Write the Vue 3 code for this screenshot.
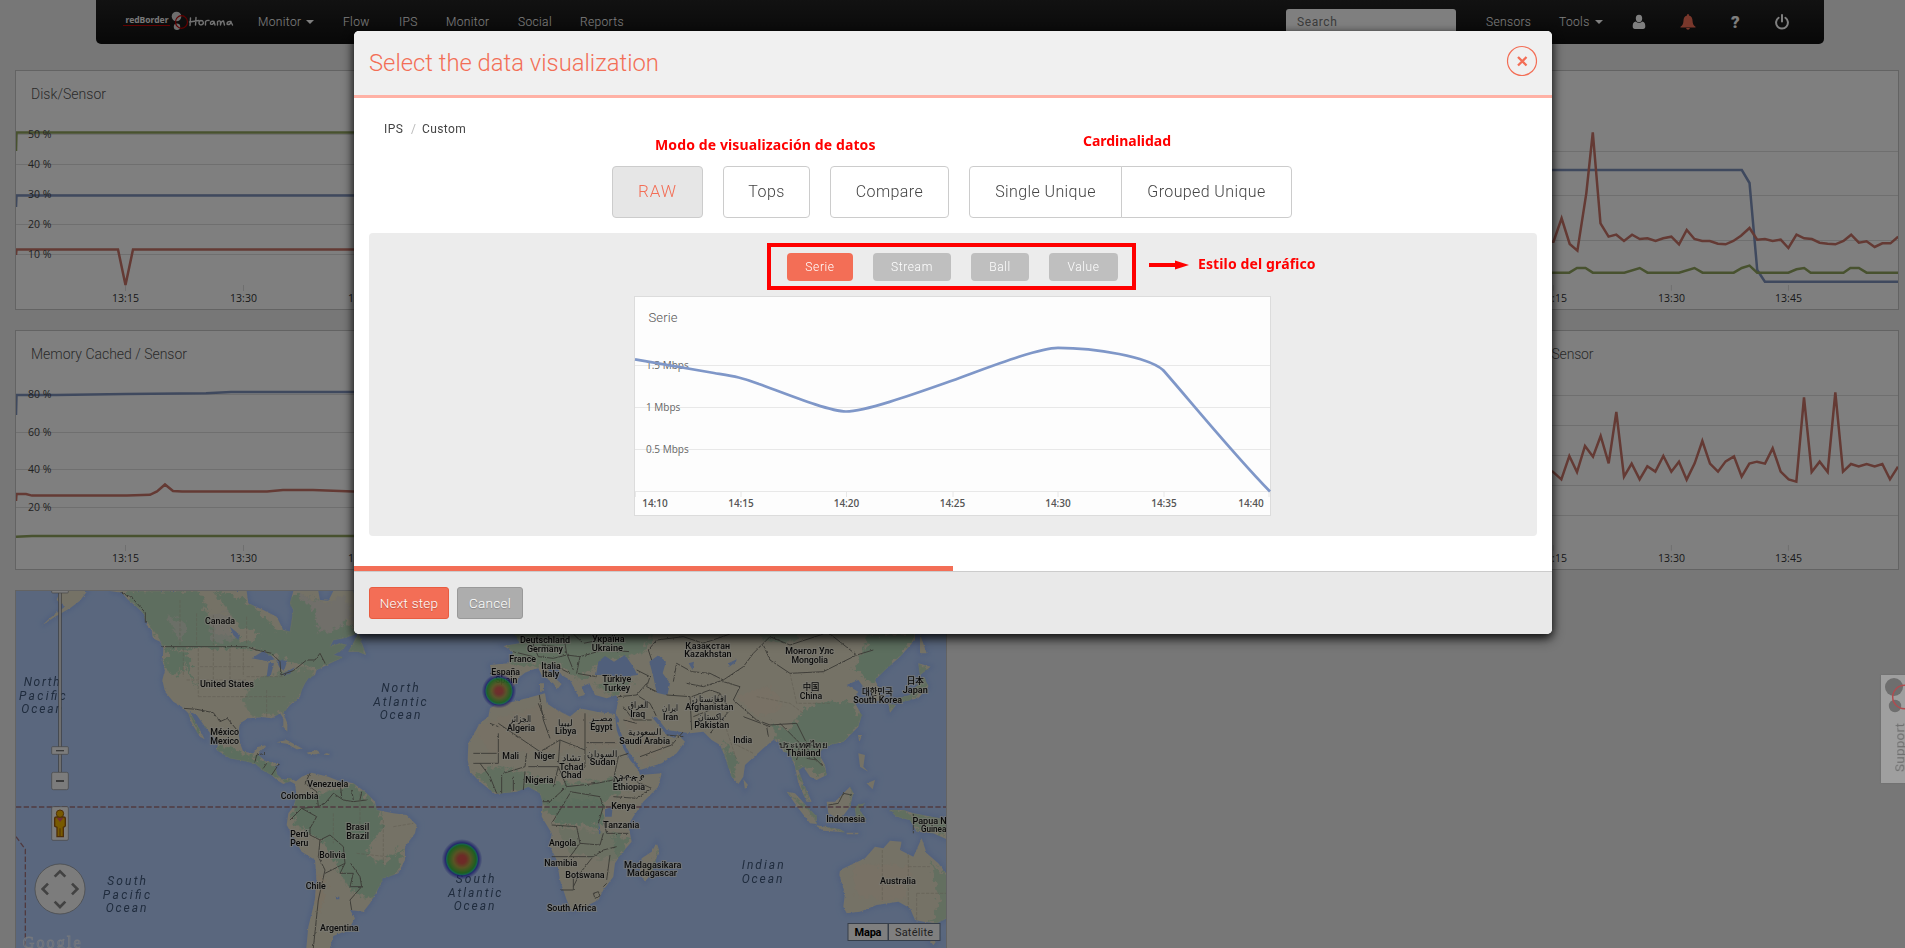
<script setup>
const leftNav = [
  { label: 'Monitor', w: 85, caret: true },
  { label: 'Flow', w: 56 },
  { label: 'IPS', w: 47 },
  { label: 'Monitor', w: 72 },
  { label: 'Social', w: 62 },
  { label: 'Reports', w: 60 },
]

const axisTicks = [
  { x: 109.5, label: '13:15' },
  { x: 227.5, label: '13:30' },
  { x: 345.5, label: '13:45' },
]

const percentRows = [
  { y: 63.5, label: '50 %' },
  { y: 93.5, label: '40 %' },
  { y: 123.5, label: '30 %' },
  { y: 153.5, label: '20 %' },
  { y: 183.5, label: '10 %' },
]
const memoryRows = [
  { y: 63.5, label: '80 %' },
  { y: 101.5, label: '60 %' },
  { y: 138.5, label: '40 %' },
  { y: 176.5, label: '20 %' },
]

const modes = [
  { label: 'RAW', w: 91, active: true },
  { label: 'Tops', w: 87 },
  { label: 'Compare', w: 119 },
]
const styles = [
  { label: 'Serie', w: 66, active: true },
  { label: 'Stream', w: 78 },
  { label: 'Ball', w: 58 },
  { label: 'Value', w: 69 },
]

const serieRows = [
  { y: 69.5, label: '1.5 Mbps' },
  { y: 111.5, label: '1 Mbps' },
  { y: 153.5, label: '0.5 Mbps' },
]
const serieTicks = [
  { x: 0.5, tx: 20, label: '14:10' },
  { x: 106, tx: 106, label: '14:15' },
  { x: 211.5, tx: 211.5, label: '14:20' },
  { x: 318, tx: 317.5, label: '14:25' },
  { x: 423, tx: 423, label: '14:30' },
  { x: 529, tx: 529, label: '14:35' },
  { x: 634, tx: 616, label: '14:40' },
]

const westLabels = [
  [660, 132, 'Canada', 90], [681, 321, 'United States', 162], [674, 465, 'México', 86], [674, 492, 'Mexico', 86],
  [983, 621, 'Venezuela', 123], [899, 657, 'Colombia', 113], [1073, 750, 'Brasil', 70], [1073, 777, 'Brazil', 69],
  [898, 771, 'Perú', 54], [898, 798, 'Peru', 54], [997, 834, 'Bolivia', 78], [947, 927, 'Chile', 60], [1018, 1053, 'Argentina', 116],
]
const eastLabels = [
  [225, 69, 'Deutschland', 150], [225, 96, 'Germany', 108], [415, 66, 'Україна', 98], [412, 93, 'Ukraine', 94],
  [158, 126, 'France', 80], [243, 147, 'Italia', 58], [242, 171, 'Italy', 52], [107, 165, 'España', 86], [109, 189, 'Spain', 66],
  [440, 187, 'Türkiye', 87], [440, 214, 'Turkey', 80], [713, 87, 'Қазақстан', 134], [714, 111, 'Kazakhstan', 142],
  [1019, 102, 'Монгол Улс', 146], [1019, 129, 'Mongolia', 109], [1023, 210, '中国', 50], [1023, 237, 'China', 67],
  [1222, 225, '대한민국', 92], [1223, 249, 'South Korea', 146], [1336, 192, '日本', 52], [1336, 219, 'Japan', 75],
  [505, 264, 'العراق', 64], [503, 291, 'Iraq', 45], [601, 273, 'ايران', 50], [602, 300, 'Iran', 46],
  [718, 246, 'افغانستان', 102], [718, 270, 'Afghanistan', 145], [724, 300, 'باكستان', 80], [725, 324, 'Pakistan', 105],
  [152, 306, 'الجزائر', 66], [153, 333, 'Algeria', 84], [287, 318, 'ليبيا', 44], [287, 342, 'Libya', 64],
  [394, 304, 'مصــر', 70], [394, 330, 'Egypt', 67], [525, 345, 'السعودية', 104], [524, 371, 'Saudi Arabia', 152],
  [818, 369, 'India', 57], [999, 384, 'ประเทศไทย', 146], [1000, 408, 'Thailand', 104],
  [122, 417, 'Mali', 50], [224, 417, 'Niger', 62], [304, 423, 'تشاد', 58], [304, 450, 'Tchad', 72], [304, 474, 'Chad', 62],
  [397, 411, 'السودان', 90], [398, 435, 'Sudan', 77], [208, 489, 'Nigeria', 84], [475, 483, 'ኢትዮጵያ', 92], [477, 510, 'Ethiopia', 97],
  [460, 567, 'Kenya', 73], [454, 624, 'Tanzania', 108], [278, 678, 'Angola', 82], [272, 738, 'Namibia', 99],
  [345, 774, 'Botswana', 118], [548, 744, 'Madagasikara', 172], [546, 768, 'Madagascar', 150], [305, 873, 'South Africa', 148],
  [1127, 606, 'Indonesia', 117], [1379, 612, 'Papua N', 103], [1391, 636, 'Guinea', 76], [1284, 792, 'Australia', 108],
]
const westSeas = [
  [125, 318, 'North', 108], [127, 361, 'Pacific', 140], [125, 400, 'Ocean', 122],
  [1200, 336, 'North', 112], [1200, 378, 'Atlantic', 160], [1200, 418, 'Ocean', 122],
  [380, 915, 'South', 116], [379, 957, 'Pacific', 142], [378, 997, 'Ocean', 122],
  [1425, 909, 'South', 116], [1424, 951, 'Atlantic', 160], [1422, 991, 'Ocean', 122],
]
const eastSeas = [[878, 748, 'Indian', 126], [876, 788, 'Ocean', 122]]
</script>

<template>
  <div class="page">
    <header class="navbar">
      <svg class="logo" width="140" height="44" viewBox="0 0 140 44">
        <text x="15.500" y="23" class="brand" textLength="43" lengthAdjust="spacingAndGlyphs">redBorder</text>
        <path d="M13 25.500H60" stroke="#c00000" stroke-width="1" />
        <circle cx="66.500" cy="16.500" r="4.800" fill="#dcdcdc" />
        <circle cx="67" cy="26.800" r="3.200" fill="#dcdcdc" />
        <ellipse cx="71.500" cy="22" rx="6" ry="6.300" fill="none" stroke="#c00000" stroke-width="1.200" />
        <g fill="none" stroke="#e4e4e4" stroke-width="1.400" stroke-linecap="round" stroke-linejoin="round">
          <path d="M80.500 18L80 25.500M86 17.500L85.500 25M79.500 22L89 20.500" />
          <path d="M91 20.500C88 21 88.500 25.500 91.500 24.800C94.500 24 93.500 20.500 91 20.500" />
          <path d="M95.500 25V21.500Q97 20 99 20.500M104 21.500Q100 20.500 100.500 24Q103 25.500 104 21.500L105 25M107.500 25V21.500Q110 20 110.500 22V25Q111 21 113.500 21L114.500 25M121 21.500Q117 21 117 24Q120 25.500 121 22L122.500 25" />
        </g>
      </svg>
      <nav class="links">
        <a v-for="(n, i) in leftNav" :key="i" :style="{ width: n.w + 'px' }">{{ n.label }}<i v-if="n.caret" class="caret"></i></a>
      </nav>
      <div class="search">Search</div>
      <nav class="tools">
        <a class="sensors">Sensors</a>
        <a class="tool">Tools<i class="caret"></i></a>
        <svg width="14" height="16" viewBox="0 0 14 16" fill="#fff"><path d="M7 .8C9.300 .8 10.200 2.500 10.200 4.500S9 8.300 7 8.300 3.800 6.500 3.800 4.500 4.700.8 7 .8ZM3.500 7.500Q7 10.300 10.500 7.500C12.800 8 13.300 10 13.300 12.300Q13.300 15 11 15H3Q.7 15 .7 12.300C.7 10 1.200 8 3.500 7.500Z" /></svg>
        <svg width="16" height="16" viewBox="0 0 16 16" fill="#f36e56"><path d="M8 0Q9 0 9 1.400C11.800 2 12.400 4.300 12.500 6.500C12.700 10 13.500 11.300 15.500 12.800V13.600H.5V12.800C2.500 11.300 3.300 10 3.500 6.500C3.600 4.300 4.200 2 7 1.400Q7 0 8 0ZM6 14H10Q9.500 15.800 8 15.800T6 14Z" /></svg>
        <span class="help">?</span>
        <svg width="16" height="16" viewBox="0 0 16 16" fill="none" stroke="#fff" stroke-width="2" stroke-linecap="round"><path d="M8 1V7.500M4.600 3.800A5.900 5.900 0 1 0 11.400 3.800" /></svg>
      </nav>
    </header>

    <main class="board">
      <section class="panel">
        <svg class="plot" width="454" height="238" viewBox="0 0 454 238">
          <text class="title" x="15" y="28" textLength="75">Disk/Sensor</text>
          <path v-for="r in percentRows" :key="r.y" class="grid" :d="`M0 ${r.y}H454`" />
          <path v-for="t in axisTicks" :key="t.x" class="grid" :d="`M${t.x} 214V220`" />
          <path class="line green" d="M0 80L.5 61.500H454" />
          <path class="line blue" d="M0 136L.5 124.500H454" />
          <path class="line red" d="M0 184L.5 178.500H102L109.500 214L117 178.500H454" />
          <text v-for="r in percentRows" :key="r.label" class="axis" x="12" :y="r.y + 3">{{ r.label }}</text>
          <text v-for="t in axisTicks" :key="t.label" class="axis mid" :x="t.x" y="231">{{ t.label }}</text>
        </svg>
      </section>
      <section class="panel"></section>
      <section class="panel"></section>
      <section class="panel">
        <svg class="plot" width="454" height="238" viewBox="0 0 454 238">
          <g transform="translate(-174 -71) scale(.405 .33333)">
            <path class="grid" d="M500 454.500H1560M500 586.500H1560M500 721.500H1560M991 855V872M1280 855V872M700 855V872" />
            <path class="line blue" d="M600 510H1165L1184 549L1203 810L1222 845H1560" />
            <path class="line red" d="M680 725H700L720 655L740 732L759 752L781 580L797 397L816 670L836 710L855 704L874 723L894 704L913 717L932 715L952 723L971 715L991 710L1010 733L1029 690L1048 717L1067 723H1086L1106 731L1125 733L1144 723L1163 707L1184 684L1203 719L1222 717L1241 723L1261 719L1280 744L1300 704L1319 715L1338 717L1357 728L1377 731L1396 733L1416 723L1435 704L1454 728L1473 724L1493 741L1512 730H1532L1551 710" />
            <path class="line green" d="M600 818H739L758 804H779L797 818H875L913 804L932 818H1010L1048 804L1068 818H1145L1165 804L1184 797L1203 818H1280L1300 808L1319 804L1335 818H1416L1433 804H1454L1473 818H1560" />
          </g>
          <text class="axis mid" x="109.500" y="231">13:15</text>
          <text class="axis mid" x="227.500" y="231">13:30</text>
          <text class="axis mid" x="344.500" y="231">13:45</text>
        </svg>
      </section>

      <section class="panel">
        <svg class="plot" width="454" height="238" viewBox="0 0 454 238">
          <text class="title" x="15" y="28" textLength="156">Memory Cached / Sensor</text>
          <path v-for="r in memoryRows" :key="r.y" class="grid" :d="`M0 ${r.y}H454`" />
          <path v-for="t in axisTicks" :key="t.x" class="grid" :d="`M${t.x} 214V220`" />
          <path class="line blue" d="M0 84L.5 64H40L110 63L190 62.300L215 61H454" />
          <path class="line red" d="M0 170L.5 163H10L16 164.600H111L134 163.800L141 160.500L149 153.500L157 160L166 160.500H251L267 159H297L337 160.500H454" />
          <path class="line green" d="M0 205.700L16 205H454" />
          <text v-for="r in memoryRows" :key="r.label" class="axis" x="12" :y="r.y + 3">{{ r.label }}</text>
          <text v-for="t in axisTicks" :key="t.label" class="axis mid" :x="t.x" y="231">{{ t.label }}</text>
        </svg>
      </section>
      <section class="panel"></section>
      <section class="panel"></section>
      <section class="panel">
        <svg class="plot" width="454" height="238" viewBox="0 0 454 238">
          <text class="title" x="107.500" y="28" textLength="42">Sensor</text>
          <g transform="translate(96 -21) scale(.33333)">
            <path class="grid" d="M-290 256.500H1080M-290 346.500H1080M-290 436.500H1080M-290 526.500H1080M-290 616.500H1080M40 705V722M394 705V722M745 705V722" />
            <path class="line red" d="M20 480L38 485L64 508L88 438L111 486L135 408L159 440L182 378L206 460L229 306L252 500L275 461L299 508L322 469L346 485L370 438L394 485L417 455L440 509L464 460L487 393L510 461L534 485L557 454L582 439L605 500L628 461L651 455L675 461L698 415L722 485L746 508L769 515L792 262L815 486L839 455L863 486L886 247L909 485L933 462L956 469L980 462L1004 469L1027 462L1050 508L1074 470" />
          </g>
          <text class="axis mid" x="109.500" y="231">13:15</text>
          <text class="axis mid" x="227.500" y="231">13:30</text>
          <text class="axis mid" x="344.500" y="231">13:45</text>
        </svg>
      </section>

      <section class="panel map">
        <svg class="plot" width="931" height="420" viewBox="0 0 931 420">
          <defs>
            <filter id="coast" x="-5%" y="-5%" width="110%" height="110%">
              <feTurbulence type="fractalNoise" baseFrequency=".11" numOctaves="3" seed="4" result="n" />
              <feDisplacementMap in="SourceGraphic" in2="n" scale="7" xChannelSelector="R" yChannelSelector="G" />
            </filter>
            <filter id="mottle" x="-10%" y="-10%" width="120%" height="120%">
              <feTurbulence type="fractalNoise" baseFrequency=".06" numOctaves="4" seed="9" result="n" />
              <feDisplacementMap in="SourceGraphic" in2="n" scale="40" xChannelSelector="R" yChannelSelector="G" />
              <feGaussianBlur stdDeviation="1.800" />
            </filter>
            <filter id="shelf" x="-5%" y="-5%" width="110%" height="110%"><feGaussianBlur stdDeviation="8" /></filter>
            <radialGradient id="heat">
              <stop offset="0" stop-color="#e0504e" /><stop offset=".2" stop-color="#d8584e" /><stop offset=".42" stop-color="#b0a848" />
              <stop offset=".68" stop-color="#3fbe3e" /><stop offset=".76" stop-color="#2ac4a0" /><stop offset=".81" stop-color="#3034d0" stop-opacity=".8" />
              <stop offset="1" stop-color="#3034c8" stop-opacity="0" />
            </radialGradient>
            <g id="west">
              <path d="M180 33H262L240 62L210 85L165 110L125 137L150 114L195 80L170 60Z" />
              <path d="M330 33L365 38L385 60L410 80L430 100L440 135L455 150L458 175L480 185L490 205L488 245L495 270L487 300L495 335L520 365L545 380L565 400L575 430L600 470L614 478L600 450L580 415L570 395L590 405L615 440L640 470L655 490L650 510L690 535L735 543L765 550L790 572L815 585L830 600L850 612L870 604L885 612L890 650L880 680L865 700L860 735L885 780L905 815L945 840L950 900L945 960L925 1040L905 1250H1000L990 1104L1000 1068L1045 1050L1065 1015L1050 990L1090 995L1110 970L1130 935L1150 895L1195 880L1215 840V800L1245 760L1250 735L1220 705L1180 700L1130 690L1125 665L1095 635L1060 610L1010 600L985 590L935 578L905 590L888 604L870 594L850 600L832 585L825 560L835 550L800 545L775 525L780 515L800 495L775 500L760 520L730 515L720 490L715 455L720 430L745 415L790 412L815 415L840 400L850 415V440L862 455V430L850 400L870 375L900 350L905 330L915 310L925 295L945 285L950 270L975 258L1000 245L1030 232L1000 225L1025 210L1040 195L1020 190L990 200L1000 180L1030 175L1060 165L1080 150L1060 33H1000L985 62L960 60L955 33H880L870 70L880 90L870 155L850 150L830 110L790 90L745 70L740 33Z" />
              <path d="M1045 215L1060 190L1075 160L1098 225L1075 215ZM830 487L860 480L908 506L890 508L860 491ZM920 518L950 510L962 520L930 526ZM976 520H988V525H976Z" />
            </g>
            <g id="east">
              <path d="M120 20L150 70L100 78L130 95L115 130L60 135L68 165L60 190V215L85 218L105 215L130 200L150 170L165 158L185 150L205 145L215 165L250 190L262 208L275 192L255 175L235 150L240 135L252 130L275 165L300 180L315 210L325 230L345 225L335 200L358 190L375 225L410 235L440 225L445 240L437 280L448 300L443 312L470 385L500 430L510 450L575 430L620 400L645 365L622 342L615 355L590 345L545 290L560 292L590 330L660 340L700 335L725 360L750 375L765 410L785 470L805 492L820 470L825 435L880 385L910 360L925 365L940 395L960 400L975 440L985 490L1010 545H1025L1000 490L985 450L1000 440L1020 470L1040 480L1070 465L1065 435L1045 400L1060 385L1080 375L1120 365L1165 320L1175 285L1150 240L1165 215L1130 195L1165 180L1180 200L1200 210L1215 245L1235 240L1225 200L1215 180L1245 150L1290 110L1335 60V20Z" />
              <path d="M-5 370L30 310L55 290L60 265L85 250L130 245L225 220L230 250L260 270L300 290L330 265L380 275L435 282L440 330L460 385L480 420L505 450L510 465L575 460L565 500L520 545L490 590L475 615L485 665L455 700L435 730L430 770L400 810L385 840L345 860L305 874L290 840L270 780L260 720L240 680L245 640L215 590L218 545L210 520L175 500L140 515L75 522L30 485L0 455L-7 420Z" />
              <path d="M560 668L567 690L545 760L525 785L508 760L515 715L545 695ZM820 478L834 495L825 508ZM950 515L975 520L1040 590V612L1020 610L985 565ZM1035 615L1110 628L1125 637L1060 632ZM1070 545L1095 545L1140 500L1150 520L1140 560L1110 600L1075 580ZM1155 560L1185 548L1168 570L1190 600L1170 590L1160 610ZM1165 400L1185 405L1180 440L1195 455L1170 440ZM1190 490L1215 480L1208 508ZM1258 570L1300 570L1330 580L1435 600V660L1390 640L1340 635L1320 600L1280 590ZM1164 345H1176L1168 367ZM1108 765L1110 750L1185 715L1215 680L1240 685L1260 662L1295 665L1290 690L1330 710L1355 655L1370 700L1405 730L1440 775V890L1400 910L1360 905L1335 900L1320 865L1285 845L1220 855L1170 875L1130 880L1120 860L1125 820ZM1378 960H1402L1390 976ZM1350 42L1370 100L1350 100ZM1345 130L1382 140L1350 165ZM1360 168L1375 200L1345 235L1290 247L1270 240L1320 225L1345 190ZM1255 252L1278 255L1260 278ZM1130 638H1165V643H1130ZM210 190H222V212H210Z" />
            </g>
            <mask id="landWest" maskUnits="userSpaceOnUse" x="-100" y="-100" width="1700" height="1500"><use href="#west" fill="#fff" filter="url(#coast)" /></mask>
            <mask id="landEast" maskUnits="userSpaceOnUse" x="-100" y="-100" width="1700" height="1500"><use href="#east" fill="#fff" filter="url(#coast)" /></mask>
          </defs>

          <rect width="931" height="420" fill="#b4cffc" />

          <g transform="translate(-16 -11) scale(.33333)">
            <use href="#west" filter="url(#shelf)" fill="#a2c0fb" stroke="#a2c0fb" stroke-width="14" />
            <g filter="url(#coast)">
              <use href="#west" fill="#eae4cc" />
            </g>
            <g mask="url(#landWest)">
              <g filter="url(#mottle)" fill="#b8dcbc">
                <path d="M370 30L600 33L640 150L740 190L800 150L900 160L1100 130V220L960 270L860 240L760 205H500L440 130ZM640 33L740 60L850 170L870 40L960 60L1080 170L900 200L720 140Z" opacity=".9" />
                <path d="M500 205L560 215L590 330L560 260L520 290L495 260Z" />
                <path d="M760 300L920 260L950 290L850 400L760 410L730 370Z" opacity=".7" />
                <path d="M640 490L740 520L830 560L880 610L800 590L700 550Z" />
                <path d="M880 650L960 640L1060 610L1140 690L1150 730L1100 820L1150 850L1210 800L1190 880L1110 960L1050 930L980 800L930 760L880 740Z" />
                <path d="M560 400L610 440L600 460Z" />
              </g>
              <g filter="url(#mottle)" fill="#e2ded4">
                <path d="M890 40L940 90L960 160L1000 150L1060 110L1030 40L980 70Z" />
                <path d="M620 110L690 100L700 180L640 190ZM500 110L560 130L540 190Z" opacity=".7" />
                <path d="M900 850L980 900L960 1000L940 950Z" fill="#f1e0c4" />
              </g>
            </g>
            <g fill="#a0bef6" filter="url(#coast)">
              <path d="M755 235L790 213L825 238L798 243ZM800 290L806 248L822 250L812 288ZM828 240L862 242L852 272L838 262ZM840 286L885 262L870 282ZM690 140L720 165L715 180L700 165ZM1008 950H1018V958H1008Z" />
            </g>
            <g class="border" filter="url(#coast)">
              <path d="M362 38L395 52L436 98V128M484 200H738L770 210L815 220L840 245L843 285L880 272L920 240H945L960 220L978 255M552 385L590 388L640 398L660 425L682 415L715 455" />
              <path d="M765 545L770 525L795 520M790 565L800 550M815 585L838 550M930 580L915 610L950 635L955 680L905 685L870 720M955 680L975 670L1000 640L1030 660L1060 665L1100 660M1020 605L1025 650M1055 630L1060 660M1085 635L1080 660M905 685L950 710L930 745V765L960 780L955 830L975 870L955 960L940 1104M960 780L990 765L1030 800L1035 850L975 880M1035 850L1020 880L1060 880L1050 920L1085 920L1080 890L1052 850M1085 920L1050 960L1055 990" />
            </g>
            <path class="states" d="M550 205V290M595 205V350M640 205V300M690 205V300M730 205V290M600 260H760M560 300H740M595 350H740M740 290H850M640 105V195M590 100V195M540 60V195M740 110V190M720 350H860M800 330V410M1000 700V790M1080 640V760M1150 720V850M1180 740L1240 730M1070 820L1160 830" />
            <path class="equator" d="M48 681H1440" />
            <path class="equator" d="M48 770L76 808V1104" stroke-width="3" />
            <g class="sea"><text v-for="(l, i) in westSeas" :key="i" :x="l[0]" :y="l[1]" :textLength="l[3]">{{ l[2] }}</text></g>
            <circle cx="1386" cy="838" r="61" fill="url(#heat)" />
            <g class="place"><text v-for="(l, i) in westLabels" :key="i" :x="l[0]" :y="l[1]" :textLength="l[3]" lengthAdjust="spacingAndGlyphs">{{ l[2] }}</text></g>
          </g>

          <g transform="translate(454 29) scale(.33333)">
            <use href="#east" filter="url(#shelf)" fill="#a2c0fb" stroke="#a2c0fb" stroke-width="14" />
            <g filter="url(#coast)">
              <use href="#east" fill="#eae4cc" />
            </g>
            <g mask="url(#landEast)">
              <g filter="url(#mottle)" fill="#b8dcbc">
                <path d="M100 20H560L520 100L400 120L330 180L270 130L130 140Z" opacity=".8" />
                <path d="M10 460L90 440L220 480L300 490L400 480L440 470L470 510L400 540L390 610L260 600L215 560L200 510L80 525Z" opacity=".8" />
                <path d="M220 540H400V620L260 610Z" />
                <path d="M260 620L440 640L480 660L430 720L300 700Z" opacity=".4" />
                <path d="M760 360L800 420L790 490L770 440ZM900 310L960 330L1000 270L1060 240L1150 250L1180 300L1120 370L1050 400L1075 470L1000 440L1020 550L960 410L920 360Z" opacity=".9" />
                <path d="M1200 42H1340L1290 110L1210 190L1150 150L1180 90Z" />
                <path d="M860 20L1000 30L960 70L880 60Z" opacity=".7" />
                <path d="M940 510L1050 610L1130 640L1150 500L1230 560L1440 600V650L1240 600L1200 620L1060 590Z" opacity=".8" />
                <path d="M1380 720L1440 780V900L1380 915L1410 840Z" opacity=".7" />
                <path d="M565 670L550 760L540 750ZM430 640L480 660L440 720ZM1340 130L1400 150L1360 220L1260 270ZM375 195L440 180L500 180L430 230Z" opacity=".8" />
              </g>
              <g filter="url(#mottle)" fill="#f0e2ca">
                <path d="M10 320L200 260L420 290L450 380L60 400Z" opacity=".7" />
                <path d="M460 290L540 310L600 370L520 440Z" opacity=".8" />
                <path d="M800 230L900 200L940 260L860 290ZM1150 730L1330 740L1300 840L1160 830Z" />
              </g>
            </g>
            <g fill="#a0bef6" filter="url(#coast)">
              <path d="M378 165L385 125L405 108L432 125L465 105L490 140L502 165L455 172L410 165ZM538 125L565 106L588 125L578 160L600 190L592 226L560 218L550 170ZM405 568L428 560L425 590H405ZM656 130L672 125L668 150ZM385 595L392 640L387 640ZM775 130L800 118L798 125L778 140Z" />
            </g>
            <g class="border" filter="url(#coast)">
              <path d="M205 42L190 75L205 110L250 115L290 105L330 110L400 90L480 95M280 42L290 100L310 150M330 110L320 160L380 170M215 75L260 80M130 95L190 110M60 160L140 165M240 130L300 160M310 42L340 70L390 60M535 90L560 60L640 50L700 70L780 42M535 90L545 120M610 185L620 130L665 155L720 160L760 180L700 200L650 190M760 180L820 140L850 100L900 50L960 75L1060 42M880 75L900 120L960 160L1060 155L1160 105L1080 42M1160 105L1210 90M760 185L810 200L790 240L860 300L900 315L980 310L1010 370L1050 385" />
              <path d="M500 150L540 170L530 200L560 215M445 230L500 225L540 250L560 290M500 225L530 190M460 260L490 300L545 300M460 300L500 310M590 225L660 230L665 330M665 230L720 210L750 220L720 270L670 290M750 220L780 270L720 340M820 290L900 320M890 320L895 350M930 310L990 370L980 420M1000 370L1030 410L1060 440M1010 415L1040 420" />
              <path d="M85 310L210 395L270 360L345 390V280M60 310L85 320M85 340V430H10M208 225L220 300L240 355M350 368H440M205 250L225 300M345 390V440L320 470M270 360L265 430M170 400L165 440L100 460M175 440L265 440L250 500M10 400H80M30 430L60 470L80 520M95 465V520M130 470V515M165 455L160 510M265 440L290 500L380 490L430 480L445 410L475 400M290 500L240 545H218M300 520L270 570L245 610M300 515L390 530L400 560L385 610M430 530L500 535L545 505L500 485M400 600L410 640H475M245 615L320 620L330 670L300 710H245M330 670L390 675L400 640M300 710H370L400 690L440 680M365 715L330 760L310 800M270 810L310 810V770M420 705L410 780M400 800L410 790M370 820L385 815L390 828L375 835Z" />
              <path d="M1075 555L1105 550L1120 520L1145 525M1330 582V640M640 335L605 375L510 410M590 345L640 350" />
            </g>
            <path class="states" d="M1237 690V845M1315 705V865M1340 820H1430M1340 820V900M1315 740H1380M860 230L960 250L1000 280M960 160L980 250L1080 250M760 300L800 420M790 370L850 400" />
            <path class="equator" d="M-30 561H1430" />
            <g class="sea"><text v-for="(l, i) in eastSeas" :key="i" :x="l[0]" :y="l[1]" :textLength="l[3]">{{ l[2] }}</text></g>
            <g class="place"><text v-for="(l, i) in eastLabels" :key="i" :x="l[0]" :y="l[1]" :textLength="l[3]" lengthAdjust="spacingAndGlyphs">{{ l[2] }}</text></g>
            <circle cx="87" cy="213" r="52" fill="url(#heat)" opacity=".92" />
          </g>

          <g transform="translate(-16 -11) scale(.33333)">
            <path d="M180 33V578" stroke="#777" stroke-width="10" /><path d="M180 33V578" stroke="#f4f4f4" stroke-width="5" />
            <g fill="#f8f8f8" stroke="#8a8a8a" stroke-width="2">
              <rect x="155" y="24" width="50" height="15" rx="3" /><rect x="155" y="500" width="50" height="23" rx="3" />
              <rect x="155" y="577" width="50" height="52" rx="5" /><rect x="155" y="680" width="50" height="101" rx="4" />
              <circle cx="180" cy="927" r="75" />
            </g>
            <path d="M168 512H192" stroke="#777" stroke-width="4" /><path d="M168 603H192" stroke="#777" stroke-width="6" />
            <g fill="none" stroke="#858585" stroke-width="8"><path d="M164 890L180 874L196 890M164 965L180 981L196 965M144 911L128 927L144 943M216 911L232 927L216 943" /></g>
            <path d="M164 716Q164 711 170 711H190Q196 711 196 716V738L190 742V770H171V742L164 738Z" fill="#f0b400" stroke="#9c5c10" stroke-width="4" />
            <path d="M180 745V768" stroke="#9c5c10" stroke-width="3" />
            <path d="M170 714H190L180 726Z" fill="#e05c6c" />
            <circle cx="180" cy="701" r="11" fill="#f0b400" stroke="#9c5c10" stroke-width="3" />
            <text x="68" y="1104" class="google" textLength="174">Google</text>
          </g>
          <g transform="translate(16 29)">
            <rect x="815.500" y="303" width="93" height="18" fill="#6f7c92" />
            <rect x="816.500" y="304" width="39" height="16" fill="#fff" /><rect x="857" y="304" width="50.500" height="16" fill="#fff" />
            <text x="836" y="316" class="type on" textLength="27">Mapa</text><text x="882" y="316" class="type" textLength="38">Satélite</text>
          </g>
        </svg>
      </section>
    </main>

    <div class="backdrop"></div>

    <aside class="support">
      <svg width="24" height="108" viewBox="0 0 24 108">
        <circle cx="13" cy="12" r="9" fill="#6e6e6e" /><circle cx="14" cy="31" r="6.200" fill="#6e6e6e" />
        <circle cx="23.500" cy="22" r="11.800" fill="none" stroke="#b04c50" stroke-width="1.500" />
        <text transform="translate(23.300 97) rotate(-90)" textLength="49">Support</text>
      </svg>
    </aside>

    <div class="modal">
      <div class="modal-head">
        <h2>Select the data visualization</h2>
        <svg width="32" height="32" viewBox="0 0 32 32" fill="none" stroke="#f36e56"><circle cx="16" cy="16" r="14.500" stroke-width="1.200" /><path d="M12 12L20.500 20.500M20.500 12L12 20.500" stroke-width="2.300" /></svg>
      </div>
      <div class="modal-body">
        <div class="crumbs"><span class="c1">IPS</span><i>/</i><span class="c2">Custom</span></div>
        <div class="modes">
          <button v-for="m in modes" :key="m.label" :class="{ active: m.active }" :style="{ width: m.w + 'px' }">{{ m.label }}</button>
          <div class="group"><button class="single">Single Unique</button><button class="grouped">Grouped Unique</button></div>
        </div>
        <div class="well">
          <div class="styles">
            <button v-for="s in styles" :key="s.label" :class="{ active: s.active }" :style="{ width: s.w + 'px' }">{{ s.label }}</button>
          </div>
          <svg class="serie" width="637" height="220" viewBox="0 0 637 220">
            <rect x=".5" y=".5" width="636" height="219" fill="#fdfdfd" stroke="#dcdcdc" />
            <text x="14.500" y="26" class="stitle" textLength="29">Serie</text>
            <path v-for="r in serieRows" :key="r.y" class="sgrid" :d="`M1 ${r.y}H636`" />
            <path class="sgrid" d="M1 195.500H636" />
            <path v-for="t in serieTicks" :key="t.x" class="sgrid" :d="`M${t.x + 1} 196V201`" />
            <text v-for="r in serieRows" :key="r.label" class="saxis" x="12" :y="r.y + 3">{{ r.label }}</text>
            <text v-for="t in serieTicks" :key="t.label" class="saxis bold" :x="t.tx + 1" y="211">{{ t.label }}</text>
            <path d="M1 63.300L80 77C98 80 107 81 125 88C150 97 195 115.500 212 115.500C232 115.500 283 97 318.500 84.500C353 72 404 51.800 424 51.800C462 51.800 514 61 529 74C547 94 600 159 636 195.500" fill="none" stroke="#7f97c8" stroke-width="2.700" />
          </svg>
        </div>
        <div class="progress"></div>
      </div>
      <div class="modal-foot"><button class="next">Next step</button><button class="cancel">Cancel</button></div>
    </div>

    <svg class="notes" width="1905" height="948" viewBox="0 0 1905 948">
      <text x="655" y="150" textLength="220.500">Modo de visualización de datos</text>
      <text x="1083" y="146" textLength="88">Cardinalidad</text>
      <text x="1198" y="269" textLength="117.500">Estilo del gráfico</text>
      <rect x="769" y="245" width="365" height="43" fill="none" stroke="#f00" stroke-width="4" />
      <path d="M1149 263H1175V260.500L1189 265L1175 269.500V267H1149Z" fill="#f00" />
    </svg>
  </div>
</template>

<style>
html, body { margin: 0; overflow: hidden; }
</style>

<style scoped>
.page { position: relative; width: 1905px; height: 948px; overflow: hidden; background: #efefef; font-family: Roboto, "Open Sans", sans-serif; }
.navbar { box-sizing: border-box; width: 1728px; height: 44px; margin-left: 96px; padding-left: 14px; display: flex; border-radius: 0 0 5px 5px; background: linear-gradient(#242424, #101010); color: #fff; font-size: 12px; font-weight: 300; letter-spacing: .35px; }
.brand { font: 700 9.500px "Noto Sans", sans-serif; fill: #f0f0f0; letter-spacing: 0; }
.links { display: flex; align-items: center; margin-left: 8px; width: 1028px; }
.links a { flex: none; line-height: 44px; }
.caret { display: inline-block; margin-left: 5px; vertical-align: 2px; border: 4px solid transparent; border-top-color: #fff; border-bottom: 0; }
.search { box-sizing: border-box; width: 170px; height: 27px; margin-top: 9px; padding-left: 11px; line-height: 26px; border-radius: 3px; background: #fff; color: #777; font-weight: 400; font-size: 12px; letter-spacing: .6px; }
.tools { display: flex; align-items: center; margin-left: 30px; }
.sensors { width: 73px; }
.tool { width: 73px; }
.tools svg { flex: none; }
.tools svg + svg { margin-left: 34px; }
.help { width: 9px; margin: 0 34px 0 35px; font-size: 17px; font-weight: 900; letter-spacing: 0; }
.board { display: grid; grid-template-columns: repeat(4, 456px); grid-template-rows: 240px 240px 420px; gap: 20px; margin: 26px 0 0 15px; }
.panel { box-sizing: border-box; overflow: hidden; border: 1px solid #c6c6c6; background: #fff; }
.panel.map { grid-column: span 2; }
.plot { display: block; }
.title { font-size: 14px; font-weight: 300; fill: #555; }
.axis { font: 10.500px "Open Sans", sans-serif; fill: #444; }
.mid { text-anchor: middle; font-weight: 500; fill: #333; }
.grid { fill: none; stroke: #dedede; stroke-width: 1; vector-effect: non-scaling-stroke; }
.line { fill: none; stroke-width: 2.500; vector-effect: non-scaling-stroke; }
.green { stroke: #91a45f; }
.blue { stroke: #7f92bd; }
.red { stroke: #c87468; }
.place { font: 500 26px Roboto, "Noto Sans", "Noto Sans CJK JP", "Noto Sans CJK KR", sans-serif; text-anchor: middle; fill: #151515; stroke: #f6f4e8; stroke-opacity: .65; stroke-width: 6px; paint-order: stroke; }
.sea { font: italic 400 36px Roboto, sans-serif; text-anchor: middle; fill: #40587c; }
.border { fill: none; stroke: #77756c; stroke-width: 2.800; }
.states { fill: none; stroke: #b4aa98; stroke-width: 1.800; stroke-dasharray: 10 4; opacity: .7; }
.equator { fill: none; stroke: #a0747f; stroke-width: 4; stroke-dasharray: 16 7; }
.google { font: 48px "Liberation Serif", serif; fill: none; stroke: #e8eefa; stroke-width: 2.500; }
.type { font: 11px Roboto, sans-serif; text-anchor: middle; fill: #444; }
.type.on { font-weight: 700; fill: #000; }
.backdrop { position: absolute; inset: 0; background: rgba(0, 0, 0, .5); }
.support { position: absolute; right: 0; top: 675px; width: 24px; height: 108px; background: #9f9f9f; box-shadow: 0 0 2px #666; }
.support text { font-size: 13.500px; fill: #707070; }
.modal { position: absolute; left: 354px; top: 31px; width: 1198px; height: 603px; display: flex; flex-direction: column; border-radius: 5px; overflow: hidden; background: #fff; box-shadow: 0 3px 9px rgba(0, 0, 0, .75), 0 5px 14px rgba(0, 0, 0, .5); }
.modal-head { box-sizing: border-box; flex: none; height: 67px; padding: 0 14px 0 15px; display: flex; justify-content: space-between; background: #f0f0f0; border-bottom: 3px solid #ffb1a5; }
.modal-head h2 { margin: 0; line-height: 65px; font-size: 23.800px; font-weight: 300; color: #f36e56; letter-spacing: 0; }
.modal-head svg { margin-top: 14px; }
.modal-body { flex: none; height: 473px; display: flex; flex-direction: column; }
.crumbs { display: flex; height: 20px; margin: 21px 0 0 30px; line-height: 20px; font-size: 12px; letter-spacing: .4px; color: #444; }
.crumbs i { width: 11px; margin: 0 0 0 8px; color: #bbb; font-style: normal; }
.c1 { width: 19px; }
.modes { display: flex; gap: 20px; margin: 27px 0 0 258px; }
button { box-sizing: border-box; flex: none; padding: 0; border: 0; font-family: inherit; }
.modes button { height: 52px; padding-bottom: 2px; border: 1px solid #ccc; border-radius: 4px; background: #fff; color: #444; font-size: 16px; font-weight: 300; letter-spacing: .4px; }
.modes button.active { background: #e6e6e6; color: #f36e56; font-size: 17px; letter-spacing: .9px; }
.group { display: flex; }
.modes .single { width: 153px; border-radius: 4px 0 0 4px; }
.modes .grouped { width: 171px; margin-left: -1px; border-radius: 0 4px 4px 0; }
.well { flex: none; width: 1168px; height: 303px; margin: 15px 0 0 15px; border-radius: 4px; background: #ececec; }
.styles { display: flex; gap: 20px; padding: 20px 0 0 418px; }
.styles button { height: 28px; border-radius: 4px; background: #bfbfbf; color: #fff; font-size: 12px; font-weight: 300; letter-spacing: .6px; }
.styles button.active { background: #f36e56; }
.serie { display: block; margin: 15px 0 0 265px; }
.stitle { font-size: 13px; font-weight: 300; fill: #555; }
.sgrid { fill: none; stroke: #e8e8e8; }
.saxis { font: 10px "Open Sans", sans-serif; fill: #666; }
.saxis.bold { text-anchor: middle; font-weight: 600; fill: #555; }
.progress { flex: none; width: 599px; height: 5px; margin-top: 30px; background: #f36e56; }
.modal-foot { box-sizing: border-box; flex: none; height: 63px; padding: 15px; display: flex; gap: 8px; border-top: 1px solid #ccc; background: #e9e9e9; }
.modal-foot button { height: 32px; border-radius: 3px; color: #fff; font-size: 13.500px; font-weight: 300; letter-spacing: .25px; text-shadow: 0 1px 1px rgba(0, 0, 0, .25); }
.modal-foot .next { width: 80px; border: 1px solid #e85c40; background: #f36e56; }
.modal-foot .cancel { width: 66px; border: 1px solid #999; background: #adadad; }
.notes { position: absolute; left: 0; top: 0; pointer-events: none; font: 700 14px "Noto Sans", sans-serif; fill: #f00; }
</style>
